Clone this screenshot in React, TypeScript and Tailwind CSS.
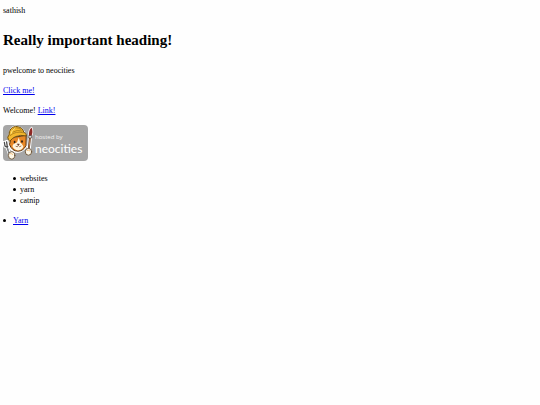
function NeocitiesBadge() {
  return (
    <svg viewBox="0 0 85 36" className="block h-9 w-[85px]" role="img" aria-label="Hosted by Neocities">
      <rect x="0" y="0" width="85" height="36" rx="4" fill="#a6a6a6" />
      <g strokeLinejoin="round" strokeLinecap="round">
        {/* fork */}
        <path d="M7 30 L4.2 22.5 M1.4 17.5 L2 21 Q4 23 6.4 20.4 L5.8 16.4 M3.6 16.8 L4.2 21" fill="none" stroke="#fff" strokeWidth="3.4" />
        <path d="M7 31 L4.2 22.5 M1.4 17.5 L2 21 Q4 23 6.4 20.4 L5.8 16.4 M3.6 16.8 L4.2 21" fill="none" stroke="#4b4b4b" strokeWidth="1.3" />
        <path d="M7 30 L4.4 23" fill="none" stroke="#aeb7bd" strokeWidth=".7" />
        {/* brush */}
        <path d="M27 12 L25.6 26" fill="none" stroke="#fff" strokeWidth="4" />
        <path d="M27 12 L25.6 26" fill="none" stroke="#563526" strokeWidth="2" />
        <path d="M27.1 13 L25.8 25" fill="none" stroke="#d89855" strokeWidth=".8" />
        <path d="M26.2 11 Q25 6 28.6 2.5 Q30.4 7 28.4 11 Z" fill="#8e2925" stroke="#fff" strokeWidth="1.5" paintOrder="stroke" />
        <path d="M26.2 10.5 H28.6 V13 H26 Z" fill="#ddd" stroke="#40312b" strokeWidth=".6" />
        {/* cat and hard hat */}
        <path d="M5.5 13 L5 21 Q8 28 14 28 Q20.5 27.5 24 22 L23 9 Q20 1 12 .6 Q6 2 5.5 10 Z" fill="#fff" />
        <path d="M8 13 L6.5 19.5 Q9 26.2 15 26.2 Q20.5 26 23 20.5 L23.2 10 L19 11 Z" fill="#e88827" stroke="#573414" strokeWidth="1" />
        <path d="M15.8 12.5 L14 17.5 Q9.5 18.5 9.5 21.5 Q11.5 25.3 15 25.4 Q19.5 25 20.4 21.5 Q19 18.5 17.2 17.5 Z" fill="#fff5df" />
        <path d="M5.3 14.5 Q3.8 12 6 10 Q6.2 2.4 12.5 1.4 Q20 1.8 20.8 7.5 Q24 8 22.8 11 Q18 9.4 12.5 11.6 Q9 13.2 7 16 Z" fill="#f4b82e" stroke="#72500e" strokeWidth="1" />
        <path d="M7.2 10.5 Q13 5.5 20.2 7.8 M9.5 4.4 Q13 1 18 4.4 M10 7 Q14 4.2 19 6" fill="none" stroke="#9a7117" strokeWidth=".7" />
        <path d="M8 8.5 Q8.5 4.6 12 3.2" fill="none" stroke="#ffe27a" strokeWidth="1" />
        <ellipse cx="11.6" cy="17" rx=".9" ry="1.3" fill="#2c2119" />
        <ellipse cx="19" cy="16.5" rx=".9" ry="1.3" fill="#2c2119" />
        <path d="M14.3 19 H16.4 L15.4 20.2 Z" fill="#65352a" stroke="#65352a" strokeWidth=".5" />
        <path d="M13 21.5 Q14.6 22.7 15.4 20.5 Q16.5 22.7 18 21.2" fill="none" stroke="#75452a" strokeWidth=".7" />
        {/* paws */}
        <ellipse cx="8.6" cy="30.4" rx="3.2" ry="3.7" fill="#fff8e8" stroke="#6b5338" strokeWidth=".9" />
        <path d="M7.6 28.6 Q8.8 28.2 9.7 29.4" fill="none" stroke="#efb065" strokeWidth=".8" />
        <ellipse cx="25.5" cy="26.8" rx="3.2" ry="3.4" fill="#fff8e8" stroke="#6b5338" strokeWidth=".9" />
        <path d="M24.3 25.4 Q25.6 24.6 26.8 25.8" fill="none" stroke="#efb065" strokeWidth=".8" />
      </g>
      <text x="32" y="14" fill="#f2f2f2" className="font-['Open_Sans',sans-serif] text-[6px]">hosted by</text>
      <text x="32" y="28" fill="#fff" className="font-['Lato',sans-serif] text-[12px]">neocities</text>
    </svg>
  );
}

const items = ["websites", "yarn", "catnip"];
const link = "text-[#0000ee] underline";
const bullet = "flex items-center before:size-[3px] before:rounded-full before:bg-black before:content-['']";

export default function App() {
  return (
    <main className="min-h-screen bg-[#fefefe] px-[3px] py-[5px] font-['Liberation_Serif',serif] text-[8px] leading-[11px] text-black">
      <p>sathish</p>
      <h1 className="mt-[13px] mb-[14px] text-[15px] leading-[22px] font-bold">Really important heading!</h1>
      <div className="flex flex-col gap-[9px]">
        <p>pwelcome to neocities</p>
        <p><a href="#click" className={link}>Click me!</a></p>
        <p>Welcome! <a href="#link" className={link}>Link!</a></p>
        <a href="#neocities" className="self-start"><NeocitiesBadge /></a>
      </div>
      <ul className="mt-3 mb-[9px] pl-[10px]">
        {items.map((item) => <li key={item} className={`${bullet} gap-1`}>{item}</li>)}
      </ul>
      <ul>
        <li className={`${bullet} gap-[7px]`}><a href="#yarn" className={link}>Yarn</a></li>
      </ul>
    </main>
  );
}
